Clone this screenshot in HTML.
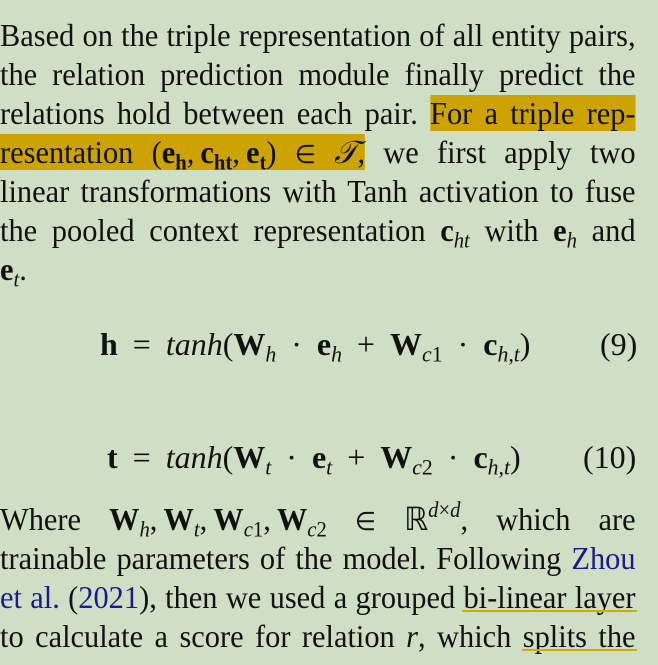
<!DOCTYPE html>
<html><head><meta charset="utf-8"><style>
body{margin:0;width:658px;height:665px;background:#cfdfc5;overflow:hidden;position:relative;font-family:"Liberation Serif",serif;color:#111;}
.l{position:absolute;left:0;width:669px;transform:scaleX(0.95);transform-origin:0 0;font-size:32px;line-height:32px;text-align:justify;text-align-last:justify;white-space:nowrap;}
.b{font-weight:bold}
i{font-style:italic}
sub{font-size:0.68em;vertical-align:-0.3em;line-height:0}
sup{font-size:0.68em;vertical-align:0.6em;line-height:0}
.hl{background:#cca300;}
.in{font-size:0.8em}
.eq{position:absolute;font-size:32px;line-height:32px;white-space:nowrap;}
.ws{word-spacing:7px}
.blue{color:#1a1a8c}
.ul{position:absolute;height:2px;background:#d4a900}
</style></head><body>
<div class="l" style="top:19px">Based on the triple representation of all entity pairs,</div>
<div class="l" style="top:58px">the relation prediction module finally predict the</div>
<div class="l" style="top:97px">relations hold between each pair. <span class="hl">For a triple rep-</span></div>
<div class="l" style="top:136px"><span class="hl">resentation (<span class="b">e<sub>h</sub></span>,&#8201;<span class="b">c<sub>ht</sub></span>,&#8201;<span class="b">e<sub>t</sub></span>) <span class="in">∈</span> <i>𝒯</i>,</span> we first apply two</div>
<div class="l" style="top:175px">linear transformations with Tanh activation to fuse</div>
<div class="l" style="top:214px">the pooled context representation <span class="b">c</span><sub><i>ht</i></sub> with <span class="b">e</span><sub><i>h</i></sub> and</div>
<div class="l" style="top:253px;text-align-last:left"><span class="b">e</span><sub><i>t</i></sub>.</div>
<div class="eq ws" style="top:328px;left:100px"><span class="b">h</span> = <i>tanh</i>(<span class="b">W</span><sub><i>h</i></sub> · <span class="b">e</span><sub><i>h</i></sub> + <span class="b">W</span><sub><i>c</i>1</sub> · <span class="b">c</span><sub><i>h,t</i></sub>)</div>
<div class="eq" style="top:328px;left:600px">(9)</div>
<div class="eq ws" style="top:441px;left:107px"><span class="b">t</span> = <i>tanh</i>(<span class="b">W</span><sub><i>t</i></sub> · <span class="b">e</span><sub><i>t</i></sub> + <span class="b">W</span><sub><i>c</i>2</sub> · <span class="b">c</span><sub><i>h,t</i></sub>)</div>
<div class="eq" style="top:441px;left:583px">(10)</div>
<div class="l" style="top:503px">Where <span class="b">W</span><sub><i>h</i></sub>,&#8201;<span class="b">W</span><sub><i>t</i></sub>,&#8201;<span class="b">W</span><sub><i>c</i>1</sub>,&#8201;<span class="b">W</span><sub><i>c</i>2</sub> <span class="in">∈</span> ℝ<sup><i>d</i>×<i>d</i></sup>, which are</div>
<div class="l" style="top:542px">trainable parameters of the model. Following <span class="blue">Zhou</span></div>
<div class="l" style="top:581px"><span class="blue">et al.</span> (<span class="blue">2021</span>), then we used a grouped bi-linear layer</div>
<div class="l" style="top:620px">to calculate a score for relation <i>r</i>, which splits the</div>
<div class="ul" style="left:462px;width:175px;top:610px"></div>
<div class="ul" style="left:522px;width:115px;top:649px"></div>
</body></html>
